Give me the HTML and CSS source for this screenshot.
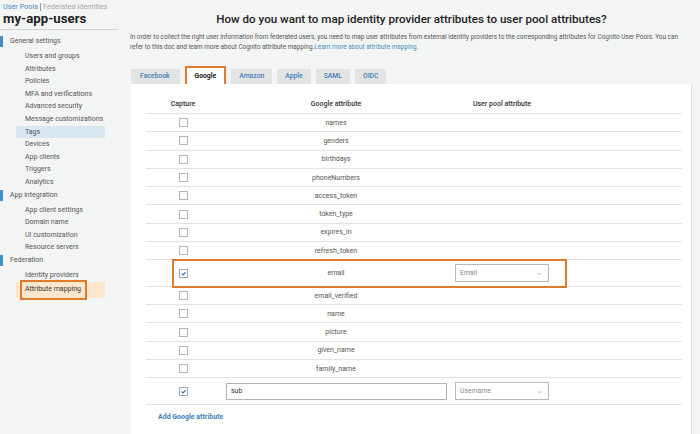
FILE: index.html
```html
<!DOCTYPE html>
<html>
<head>
<meta charset="utf-8">
<link rel="stylesheet" href="styles.css">
</head>
<body>
<div class="page">
  <aside class="sidebar">
    <div class="crumbs"><span class="crumb-link">User Pools</span><span class="crumb-sep"></span><span class="crumb-muted">Federated Identities</span></div>
    <div class="pool-name">my-app-users</div>
    <nav class="nav">
      <div class="nav-head">General settings</div>
      <div class="nav-item">Users and groups</div>
      <div class="nav-item">Attributes</div>
      <div class="nav-item">Policies</div>
      <div class="nav-item">MFA and verifications</div>
      <div class="nav-item">Advanced security</div>
      <div class="nav-item">Message customizations</div>
      <div class="nav-item nav-active">Tags</div>
      <div class="nav-item">Devices</div>
      <div class="nav-item">App clients</div>
      <div class="nav-item">Triggers</div>
      <div class="nav-item">Analytics</div>
      <div class="nav-head">App integration</div>
      <div class="nav-item">App client settings</div>
      <div class="nav-item">Domain name</div>
      <div class="nav-item">UI customization</div>
      <div class="nav-item">Resource servers</div>
      <div class="nav-head">Federation</div>
      <div class="nav-item">Identity providers</div>
      <div class="nav-item nav-current"><span class="nav-mark">Attribute mapping</span></div>
    </nav>
  </aside>
  <main class="main">
    <h1 class="title">How do you want to map identity provider attributes to user pool attributes?</h1>
    <p class="intro">In order to collect the right user information from federated users, you need to map user attributes from external identity providers to the corresponding attributes for Cognito User Pools. You can<br>refer to this doc and learn more about Cognito attribute mapping.<span class="link">Learn more about attribute mapping.</span></p>
    <div class="tabs">
      <div class="tab">Facebook</div>
      <div class="tab tab-on">Google</div>
      <div class="tab">Amazon</div>
      <div class="tab">Apple</div>
      <div class="tab">SAML</div>
      <div class="tab">OIDC</div>
    </div>
    <section class="panel">
      <div class="row head"><div class="c">Capture</div><div class="c">Google attribute</div><div class="c">User pool attribute</div><div></div></div>
      <div class="row"><div class="c"><span class="cb"></span></div><div class="c">names</div><div></div><div></div></div>
      <div class="row"><div class="c"><span class="cb"></span></div><div class="c">genders</div><div></div><div></div></div>
      <div class="row"><div class="c"><span class="cb"></span></div><div class="c">birthdays</div><div></div><div></div></div>
      <div class="row"><div class="c"><span class="cb"></span></div><div class="c">phoneNumbers</div><div></div><div></div></div>
      <div class="row"><div class="c"><span class="cb"></span></div><div class="c">access_token</div><div></div><div></div></div>
      <div class="row"><div class="c"><span class="cb"></span></div><div class="c">token_type</div><div></div><div></div></div>
      <div class="row"><div class="c"><span class="cb"></span></div><div class="c">expires_in</div><div></div><div></div></div>
      <div class="row"><div class="c"><span class="cb"></span></div><div class="c">refresh_token</div><div></div><div></div></div>
      <div class="row tall marked"><div class="c"><span class="cb on"><svg viewBox="0 0 9 9"><path d="M2 4.6 L3.9 6.3 L7.2 2.6" fill="none" stroke="#2f6fa8" stroke-width="1.4"/></svg></span></div><div class="c">email</div><div><div class="select">Email<svg class="chev" viewBox="0 0 6 4"><path d="M1 1 L3 3 L5 1" fill="none" stroke="#888" stroke-width="0.8"/></svg></div></div><div></div></div>
      <div class="row"><div class="c"><span class="cb"></span></div><div class="c">email_verified</div><div></div><div></div></div>
      <div class="row"><div class="c"><span class="cb"></span></div><div class="c">name</div><div></div><div></div></div>
      <div class="row"><div class="c"><span class="cb"></span></div><div class="c">picture</div><div></div><div></div></div>
      <div class="row"><div class="c"><span class="cb"></span></div><div class="c">given_name</div><div></div><div></div></div>
      <div class="row"><div class="c"><span class="cb"></span></div><div class="c">family_name</div><div></div><div></div></div>
      <div class="row tall"><div class="c"><span class="cb on"><svg viewBox="0 0 9 9"><path d="M2 4.6 L3.9 6.3 L7.2 2.6" fill="none" stroke="#2f6fa8" stroke-width="1.4"/></svg></span></div><div><div class="input">sub</div></div><div><div class="select">Username<svg class="chev" viewBox="0 0 6 4"><path d="M1 1 L3 3 L5 1" fill="none" stroke="#888" stroke-width="0.8"/></svg></div></div><div></div></div>
      <div class="add">Add Google attribute</div>
    </section>
  </main>
</div>
</body>
</html>
```
FILE: styles.css
```css
html, body {
  margin: 0;
  padding: 0;
}
body {
  width: 700px;
  height: 434px;
  overflow: hidden;
  background: #f3f4f4;
  font-family: Roboto, "Liberation Sans", sans-serif;
  color: #444;
}
.page {
  display: flex;
  height: 434px;
}
.sidebar {
  width: 120px;
  flex: none;
}
.crumbs {
  display: flex;
  align-items: center;
  padding: 2px 0 0 3px;
  font-size: 7.3px;
  line-height: 9px;
}
.crumb-link { color: #4a8cc2; }
.crumb-sep {
  width: 1px;
  height: 8px;
  background: #9a9a9a;
  margin: 0 2px;
}
.crumb-muted { color: #a7a7a7; }
.pool-name {
  padding: 0 0 2px 3px;
  font-size: 13.2px;
  font-weight: 700;
  color: #222;
  line-height: 16px;
  border-bottom: 1px solid #d4d6d6;
  margin-right: 2px;
}
.nav {
  padding-top: 5px;
  font-size: 7px;
  color: #555;
}
.nav-head {
  position: relative;
  padding-left: 10px;
  line-height: 12.6px;
  margin-bottom: 2.4px;
}
.nav-head::before {
  content: "";
  position: absolute;
  left: 0;
  top: 1px;
  width: 3px;
  height: 11px;
  background: #3c8fd0;
}
.nav-item {
  line-height: 12.6px;
  padding-left: 25px;
}
.nav-active {
  background: #d6e7f2;
  margin: 0 15px 0 16px;
  padding-left: 9px;
}
.nav-current {
  background: #fbe7cd;
  margin: 1px 15px 0 16px;
  padding-left: 4px;
  line-height: 14px;
}
.nav-mark {
  display: inline-block;
  border: 2px solid #e07a2c;
  padding: 1px 4px 2px 3px;
  line-height: 13px;
  margin: -2px 0;
  color: #333;
}
.main {
  flex: 1;
  padding: 0 8px 0 11px;
  min-width: 0;
}
.title {
  margin: 11px 0 0;
  text-align: center;
  font-size: 11.6px;
  font-weight: 500;
  color: #222;
  line-height: 16px;
}
.intro {
  margin: 5px -6px 0 -1px;
  font-size: 6.4px;
  line-height: 10px;
  color: #555;
  white-space: nowrap;
}
.link { color: #4a8cc2; }
.tabs {
  display: flex;
  gap: 5px;
  margin-top: 14px;
  align-items: flex-end;
}
.tab {
  height: 15px;
  padding: 0 8px;
  background: #e2e3e3;
  color: #3e80b8;
  font-size: 6.8px;
  font-weight: 500;
  line-height: 15px;
  text-align: center;
}
.tab:first-child { padding: 0 10px 0 9px; }
.tab-on {
  background: #fff;
  color: #222;
  font-weight: 700;
  border: 2px solid #e07a2c;
  border-bottom: none;
  height: 16px;
  line-height: 16px;
  padding: 0 8px;
}
.panel {
  background: #fff;
  border-right: 1px solid #dedede;
  height: 360px;
  padding: 0 9px 0 15px;
  font-size: 7px;
  color: #555;
}
.row {
  position: relative;
  display: grid;
  grid-template-columns: 74px 232px 100px 1fr;
  align-items: center;
  height: 18.3px;
  box-sizing: border-box;
  border-bottom: 1px solid #e2e2e2;
}
.row.head {
  height: 30px;
  align-items: end;
  padding-bottom: 5px;
  color: #333;
  font-weight: 500;
}
.row.tall { height: 26.5px; }
.c { text-align: center; }
.cb {
  display: inline-block;
  width: 9px;
  height: 9px;
  box-sizing: border-box;
  border: 1px solid #b5b5b5;
  vertical-align: middle;
  background: #fff;
}
.cb.on { border-color: #9ab; }
.cb svg { display: block; width: 7px; height: 7px; }
.marked::after {
  content: "";
  position: absolute;
  left: 26px;
  width: 395px;
  top: -1px;
  bottom: -2px;
  border: 2px solid #e07a2c;
  box-sizing: border-box;
  pointer-events: none;
}
.select {
  position: relative;
  margin-left: 3px;
  width: 94px;
  height: 18px;
  box-sizing: border-box;
  border: 1px solid #b9b9b9;
  padding-left: 4px;
  line-height: 16px;
  color: #888;
  font-size: 6.8px;
}
.chev {
  position: absolute;
  right: 6px;
  top: 7px;
  width: 5px;
  height: 4px;
}
.input {
  margin: 0 5px 0 6px;
  height: 17px;
  box-sizing: border-box;
  border: 1px solid #b2b2b2;
  padding-left: 4px;
  line-height: 15px;
  color: #333;
}
.add {
  margin: 8px 0 0 12px;
  color: #3e80b8;
  font-weight: 700;
  font-size: 7px;
}
```
